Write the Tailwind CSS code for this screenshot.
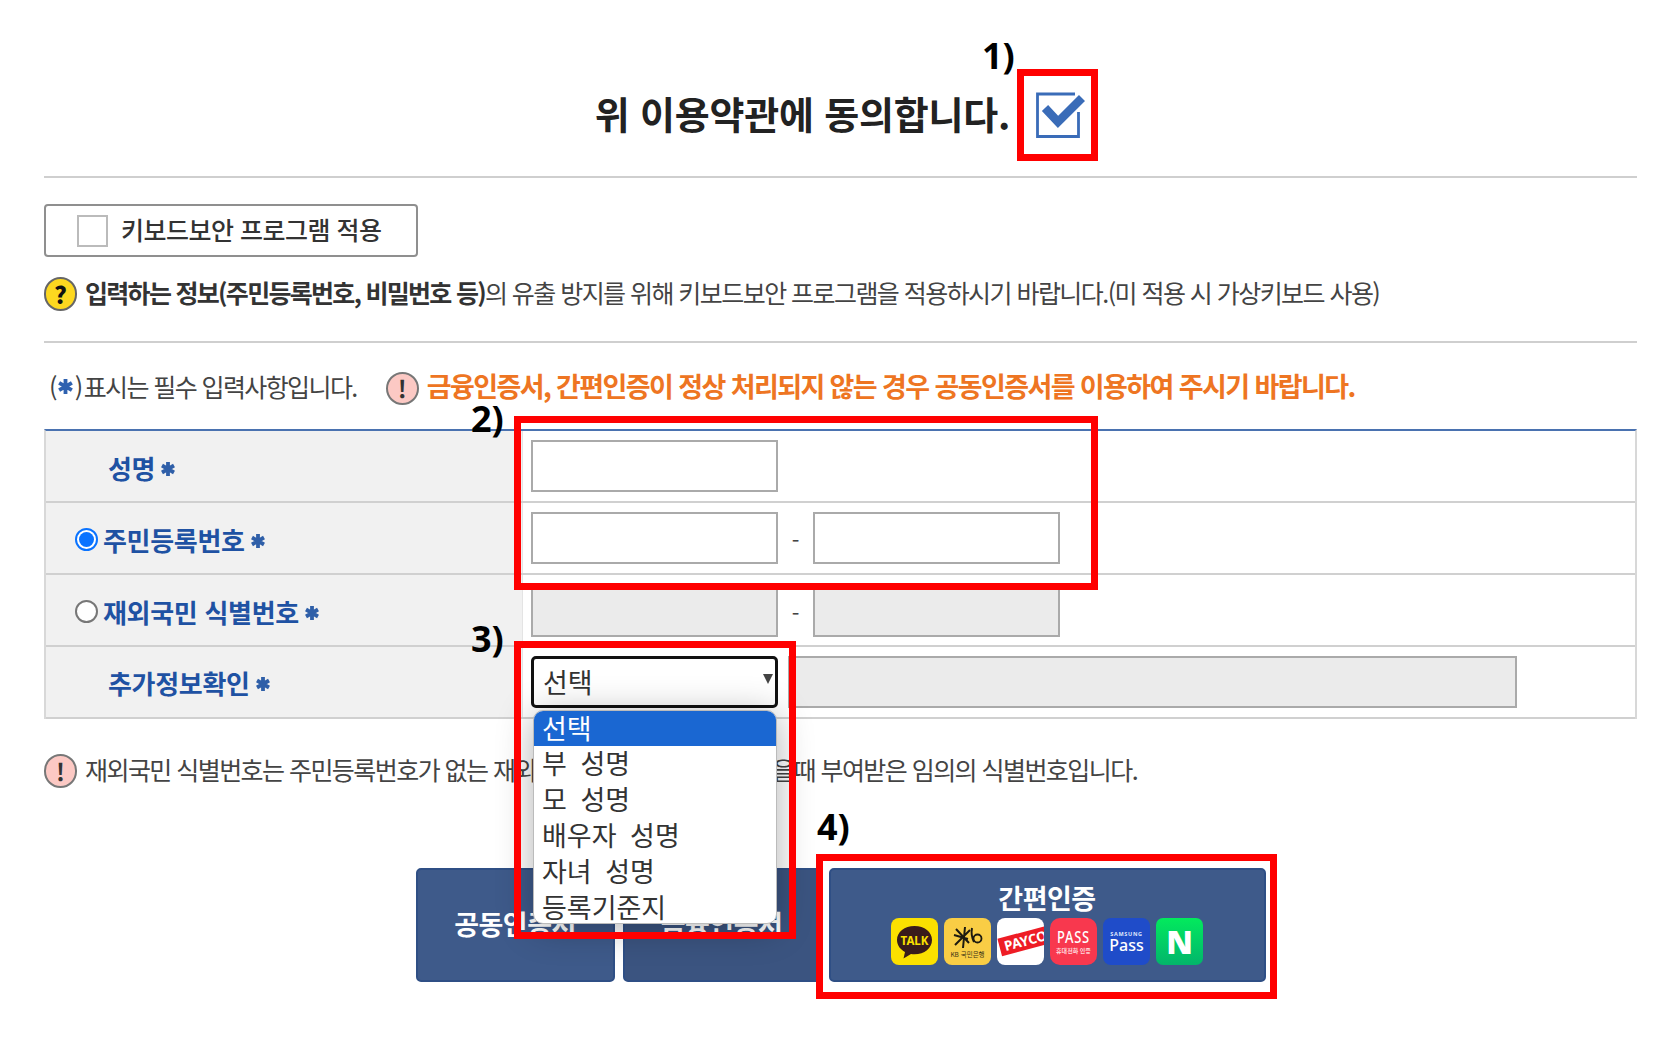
<!doctype html>
<html lang="ko">
  <head>
    <meta charset="UTF-8" />
    <title>이용약관 동의</title>
    <script src="https://cdn.jsdelivr.net/npm/@tailwindcss/browser@4"></script>
  </head>

  <body class="bg-white font-['Noto_Sans_CJK_KR',sans-serif] text-[#444]">
    <div class="relative w-[1660px] h-[1046px] pl-[44px] pr-[23px] overflow-hidden">
      <!-- Agree -->
      <div class="h-[176px] pt-[54px] flex items-center justify-center gap-[26px]">
        <h1 class="pb-[6px] text-[38px] font-bold text-[#222] tracking-[-0.2px]">위 이용약관에 동의합니다.</h1>
        <svg class="w-[50px] h-[46px]" viewBox="0 0 50 46" fill="none">
          <path d="M39 2H1.5V44.5H42.5V20" stroke="#3a6cb8" stroke-width="2.8" />
          <path d="M9 16L22 30L46 6" stroke="#3a6cb8" stroke-width="8.5" />
        </svg>
      </div>
      <div class="h-[2px] bg-[#cfcfcf]"></div>

      <!-- Keyboard security -->
      <div class="mt-[26px] w-[374px] h-[53px] border-2 border-[#8f8f8f] rounded-[4px] flex items-center pl-[31px] gap-[13px]">
        <span class="w-[31px] h-[32px] border-2 border-[#bbb] bg-white"></span>
        <span class="pb-[2px] text-[25px] font-medium text-[#333] tracking-[-0.5px]">키보드보안 프로그램 적용</span>
      </div>
      <div class="mt-[20px] h-[34px] flex items-center gap-[8px] text-[25px] tracking-[-1.55px] whitespace-nowrap">
        <span class="w-[33px] h-[34px] shrink-0 rounded-full bg-[#fdd820] border-2 border-[#666] flex items-center justify-center text-[24px] font-black text-[#111] tracking-normal">?</span>
        <p class="pb-[2px]"><b class="font-bold text-[#333] tracking-[-1.7px]">입력하는 정보(주민등록번호, 비밀번호 등)</b>의 유출 방지를 위해 키보드보안 프로그램을 적용하시기 바랍니다.(미 적용 시 가상키보드 사용)</p>
      </div>
      <div class="mt-[30px] h-[2px] bg-[#cfcfcf]"></div>

      <!-- Legend -->
      <div class="mt-[29px] h-[32px] flex items-center tracking-[-1.6px] whitespace-nowrap">
        <p class="ml-[5px] pb-[3px] flex items-center text-[25px]">
          (<svg class="w-[17px] h-[17px] mx-[1px]" viewBox="0 0 16 16" stroke="#2f62b0" stroke-width="3.6"><path d="M8 1V15M2 4.5L14 11.5M14 4.5L2 11.5" /></svg>)<span class="ml-[2px]">표시는 필수 입력사항입니다.</span>
        </p>
        <span class="ml-[29px] w-[33px] h-[33px] shrink-0 rounded-full bg-[#fcc9c4] border-2 border-[#777] flex items-center justify-center text-[24px] font-bold text-[#333] tracking-normal">!</span>
        <p class="ml-[8px] pb-[3px] text-[27px] font-bold text-[#ee7522]">금융인증서, 간편인증이 정상 처리되지 않는 경우 공동인증서를 이용하여 주시기 바랍니다.</p>
      </div>

      <!-- Form -->
      <div class="mt-[25px] border-t-2 border-t-[#4a72b0] border-x-2 border-x-[#d8d8d8]">
        <div class="h-[72px] flex border-b-2 border-[#d0d0d0]">
          <div class="w-[476px] pt-[2px] bg-[#f1f1f1] flex items-center pl-[62px] gap-[5px] text-[26px] font-bold text-[#1f52a3] tracking-[-0.3px]">
            성명
            <svg class="w-[16px] h-[16px] mt-[3px]" viewBox="0 0 16 16" stroke="#2f5fa8" stroke-width="3.8"><path d="M8 1V15M2 4.5L14 11.5M14 4.5L2 11.5" /></svg>
          </div>
          <div class="flex-1 flex items-center pl-[8px] border-l border-[#e4e4e4]">
            <div class="w-[247px] h-[52px] border-2 border-[#aaa] bg-white"></div>
          </div>
        </div>
        <div class="h-[72px] flex border-b-2 border-[#d0d0d0]">
          <div class="w-[476px] pt-[2px] bg-[#f1f1f1] flex items-center pl-[29px] gap-[5px] text-[26px] font-bold text-[#1f52a3] tracking-[-0.3px]">
            <span class="w-[23px] h-[23px] rounded-full border-2 border-[#0a73ff] bg-white flex items-center justify-center"><span class="w-[15px] h-[15px] rounded-full bg-[#0a73ff]"></span></span>
            주민등록번호
            <svg class="w-[16px] h-[16px] mt-[3px]" viewBox="0 0 16 16" stroke="#2f5fa8" stroke-width="3.8"><path d="M8 1V15M2 4.5L14 11.5M14 4.5L2 11.5" /></svg>
          </div>
          <div class="flex-1 flex items-center pl-[8px] border-l border-[#e4e4e4] text-[22px]">
            <div class="w-[247px] h-[52px] border-2 border-[#aaa] bg-white"></div>
            <span class="w-[35px] pt-[3px] text-center">-</span>
            <div class="w-[247px] h-[52px] border-2 border-[#aaa] bg-white"></div>
          </div>
        </div>
        <div class="h-[72px] flex border-b-2 border-[#d0d0d0]">
          <div class="w-[476px] pt-[3px] bg-[#f1f1f1] flex items-center pl-[29px] gap-[5px] text-[26px] font-bold text-[#1f52a3] tracking-[-0.3px]">
            <span class="w-[23px] h-[23px] rounded-full border-2 border-[#777] bg-white"></span>
            재외국민 식별번호
            <svg class="w-[16px] h-[16px] mt-[3px]" viewBox="0 0 16 16" stroke="#2f5fa8" stroke-width="3.8"><path d="M8 1V15M2 4.5L14 11.5M14 4.5L2 11.5" /></svg>
          </div>
          <div class="flex-1 flex items-center pl-[8px] pt-[2px] border-l border-[#e4e4e4] text-[22px]">
            <div class="w-[247px] h-[52px] border-2 border-[#aaa] bg-[#ebebeb]"></div>
            <span class="w-[35px] pt-[3px] text-center">-</span>
            <div class="w-[247px] h-[52px] border-2 border-[#aaa] bg-[#ebebeb]"></div>
          </div>
        </div>
        <div class="h-[72px] flex border-b-2 border-[#d0d0d0]">
          <div class="w-[476px] bg-[#f1f1f1] flex items-center pl-[62px] gap-[5px] text-[26px] font-bold text-[#1f52a3] tracking-[-0.3px]">
            추가정보확인
            <svg class="w-[16px] h-[16px] mt-[3px]" viewBox="0 0 16 16" stroke="#2f5fa8" stroke-width="3.8"><path d="M8 1V15M2 4.5L14 11.5M14 4.5L2 11.5" /></svg>
          </div>
          <div class="flex-1 flex items-center pl-[8px] border-l border-[#e4e4e4]">
            <div class="relative w-[247px] h-[52px] border-[3px] border-[#111] rounded-[5px] bg-white flex items-center pl-[9px] text-[27px] text-[#333]">
              선택
              <span class="absolute right-[2px] top-[15px] w-0 h-0 border-x-[5px] border-x-transparent border-t-[10px] border-t-[#444]"></span>
            </div>
            <div class="ml-[10px] w-[729px] h-[52px] border-2 border-[#aaa] bg-[#ebebeb]"></div>
          </div>
        </div>
      </div>

      <!-- Note -->
      <div class="mt-[35px] h-[34px] flex items-center gap-[8px] text-[25px] tracking-[-1.55px] whitespace-nowrap">
        <span class="w-[33px] h-[34px] shrink-0 rounded-full bg-[#fcc9c4] border-2 border-[#777] flex items-center justify-center text-[24px] font-bold text-[#333] tracking-normal">!</span>
        <p class="pb-[3px]">재외국민 식별번호는 주민등록번호가 없는 재외국민이 국내 거소 신고 받을때 부여받은 임의의 식별번호입니다.</p>
      </div>

      <!-- Buttons -->
      <div class="mt-[80px] flex justify-center gap-[8px] text-white font-bold">
        <button class="w-[199px] h-[114px] bg-[#3e5a8a] border-2 border-[#2f4f85] rounded-[5px] pb-[2px] text-[27px] tracking-[-0.5px]">공동인증서</button>
        <button class="w-[198px] h-[114px] bg-[#3b5480] border-2 border-[#2f4f85] rounded-[5px] pb-[2px] text-[27px] tracking-[-0.5px]">금융인증서</button>
        <div class="relative z-20 w-[437px] h-[114px] bg-[#3e5a8a] border-2 border-[#2f4f85] rounded-[5px] flex flex-col items-center">
          <span class="mt-[8px] h-[40px] text-[27px] leading-[40px] tracking-[-0.5px]">간편인증</span>
          <div class="flex gap-[6px]">
            <!-- kakao -->
            <svg class="w-[47px] h-[47px]" viewBox="0 0 47 47">
              <rect width="47" height="47" rx="8" fill="#fbe000" />
              <path d="M23.5 8C13.5 8 6 14 6 22C6 27.500 9.500 31.500 14 34L12.500 40.500L20 36C21 36.200 22.300 36.300 23.500 36.300C33.500 36.300 41 30 41 22C41 14 33.500 8 23.500 8Z" fill="#391b1b" />
              <text x="23.500" y="27" text-anchor="middle" font-size="11.500" font-weight="700" fill="#fbe000" font-family="Noto Sans">TALK</text>
            </svg>
            <!-- kb -->
            <svg class="w-[47px] h-[47px]" viewBox="0 0 47 47">
              <rect width="47" height="47" rx="8" fill="#f9cd45" />
              <path d="M10 17L24 21M21 9L19 30M12 11L25 25M26 12L11 27" stroke="#1d1a10" stroke-width="2" fill="none" />
              <path d="M28 10C27 15 28 20 30 24" stroke="#1d1a10" stroke-width="2" fill="none" />
              <circle cx="33.500" cy="20.500" r="4" stroke="#1d1a10" stroke-width="1.800" fill="none" />
              <text x="23.500" y="39" text-anchor="middle" font-size="6.500" font-weight="400" fill="#3d3516">KB 국민은행</text>
            </svg>
            <!-- payco -->
            <svg class="w-[47px] h-[47px]" viewBox="0 0 47 47">
              <rect width="47" height="47" rx="8" fill="#fff" />
              <g transform="rotate(-15 23.500 24)">
                <rect x="2" y="15" width="60" height="18" fill="#ee1c25" />
                <text x="7" y="29" font-size="13.500" font-weight="700" fill="#fff" font-family="Noto Sans">PAYCO</text>
              </g>
            </svg>
            <!-- pass -->
            <svg class="w-[47px] h-[47px]" viewBox="0 0 47 47">
              <rect width="47" height="47" rx="10" fill="#f8384e" />
              <text x="23.500" y="25" text-anchor="middle" font-size="16.500" font-weight="500" fill="#fff" letter-spacing="1" font-family="Noto Sans" textLength="33" lengthAdjust="spacingAndGlyphs">PASS</text>
              <text x="23.500" y="35" text-anchor="middle" font-size="6" fill="#ffd9dd">휴대전화 인증</text>
            </svg>
            <!-- samsung pass -->
            <svg class="w-[47px] h-[47px]" viewBox="0 0 47 47">
              <rect width="47" height="47" rx="8" fill="#1f4cc9" />
              <text x="23.500" y="18" text-anchor="middle" font-size="5.500" font-weight="700" fill="#dfe7fb" letter-spacing="0.7" font-family="Noto Sans">SAMSUNG</text>
              <text x="23.500" y="33" text-anchor="middle" font-size="16" font-weight="500" fill="#fff" font-family="Noto Sans">Pass</text>
            </svg>
            <!-- naver -->
            <div class="w-[47px] h-[47px] rounded-[7px] bg-linear-to-b from-[#03ea5c] to-[#03b56a] flex items-center justify-center font-['Noto_Sans'] text-[32px] font-black text-white leading-none">N</div>
          </div>
        </div>
      </div>

      <!-- Select dropdown -->
      <ul class="absolute z-10 left-[533px] top-[710px] w-[244px] h-[214px] overflow-hidden bg-white rounded-[10px] border border-[#bbb] shadow-[0_4px_36px_rgba(0,0,0,0.3)] text-[27px] leading-[34px] text-[#333] [word-spacing:6px]">
        <li class="h-[35px] pl-[8px] bg-[#1a67d2] text-white">선택</li>
        <li class="h-[36px] pl-[8px]">부 성명</li>
        <li class="h-[36px] pl-[8px]">모 성명</li>
        <li class="h-[36px] pl-[8px]">배우자 성명</li>
        <li class="h-[36px] pl-[8px]">자녀 성명</li>
        <li class="h-[36px] pl-[8px]">등록기준지</li>
      </ul>

      <!-- Annotations -->
      <div class="absolute z-20 left-[1017px] top-[69px] w-[81px] h-[92px] border-[7px] border-[#f00]"></div>
      <div class="absolute z-20 left-[514px] top-[416px] w-[584px] h-[174px] border-[7px] border-[#f00]"></div>
      <div class="absolute z-20 left-[514px] top-[641px] w-[282px] h-[298px] border-[7px] border-[#f00]"></div>
      <div class="absolute z-[15] left-[816px] top-[854px] w-[461px] h-[145px] bg-white border-[7px] border-[#f00]"></div>
      <span class="absolute z-20 left-[982px] top-[29px] font-['Noto_Sans'] font-bold text-[36px] text-black">1)</span>
      <span class="absolute z-20 left-[471px] top-[392px] font-['Noto_Sans'] font-bold text-[36px] text-black">2)</span>
      <span class="absolute z-20 left-[471px] top-[612px] font-['Noto_Sans'] font-bold text-[36px] text-black">3)</span>
      <span class="absolute z-20 left-[817px] top-[800px] font-['Noto_Sans'] font-bold text-[36px] text-black">4)</span>
    </div>
  </body>
</html>
